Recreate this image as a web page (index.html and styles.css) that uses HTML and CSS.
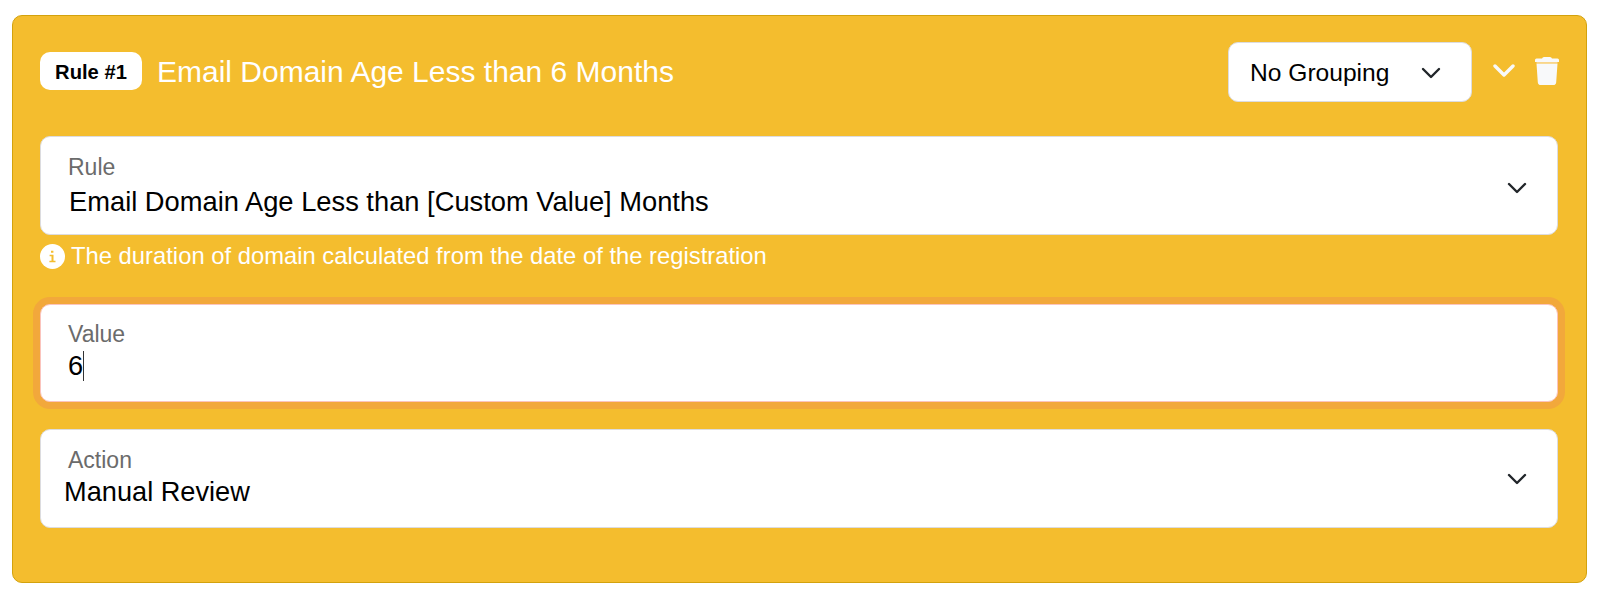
FILE: index.html
```
<!DOCTYPE html>
<html lang="en">
<head>
  <meta charset="UTF-8" />
  <meta name="viewport" content="width=device-width, initial-scale=1.0"/>
  <title>Rules</title>
  <link rel="stylesheet" href="styles.css">
</head>
<body>

  <section class="rule-card">
    <header class="rule-header">
      <span class="badge">Rule #1</span>
      <h2>Email Domain Age Less than 6 Months</h2>
      <div class="group-select">
        <span>No Grouping</span>
        <svg class="chevron" viewBox="0 0 20 12"><path d="M2 2l8 8 8-8"/></svg>
      </div>
      <svg class="collapse" viewBox="0 0 22 14"><path d="M2 2l9 9 9-9"/></svg>
      <svg class="trash" viewBox="0 0 26 30">
        <path d="M2.5 2.5H8Q8.5 1 10 1h6q1.500 0 2 1.500h5.500a1.500 1.500 0 0 1 1.500 1.500v2H1V4a1.500 1.500 0 0 1 1.500-1.500z"/>
        <path class="gap" d="M2.500 6h21v1.800h-21z"/>
        <path d="M2.500 7.800h21l-1.300 18.400a3 3 0 0 1-3 2.800H6.800a3 3 0 0 1-3-2.800z"/>
      </svg>
    </header>

    <div class="field field-rule">
      <div class="field-text">
        <label>Rule</label>
        <span class="value">Email Domain Age Less than [Custom Value] Months</span>
      </div>
      <svg class="chevron" viewBox="0 0 20 12"><path d="M2 2l8 8 8-8"/></svg>
    </div>

    <p class="hint">
      <svg class="info" viewBox="0 0 25 25">
        <circle cx="12.500" cy="12.500" r="12.500"/>
        <path d="M11 6.800h2.400v2H11zM9.600 10.700h3.900v6h2v1.600H9.400v-1.600h2.100v-4.400H9.600z"/>
      </svg>
      The duration of domain calculated from the date of the registration
    </p>

    <div class="field field-value focused">
      <div class="field-text">
        <label>Value</label>
        <span class="value">6<i class="caret"></i></span>
      </div>
    </div>

    <div class="field field-action">
      <div class="field-text">
        <label>Action</label>
        <span class="value">Manual Review</span>
      </div>
      <svg class="chevron" viewBox="0 0 20 12"><path d="M2 2l8 8 8-8"/></svg>
    </div>
  </section>

</body>
</html>
```
FILE: styles.css
```
:root {
  --yellow: #f4bd2e;
  --yellow-dark: #d3a20d;
  --focus: #f2a83b;
  --border: #dcdcdf;
}

* {
  box-sizing: border-box;
}

body {
  font-family: "Liberation Sans", Arial, sans-serif;
  margin: 0;
  padding: 15px 13px 0 12px;
  background: #fff;
  color: #000;
}

.rule-card {
  height: 568px;
  padding: 26px 28px 0 27px;
  background: var(--yellow);
  border: 1px solid var(--yellow-dark);
  border-radius: 10px;
}

.rule-header {
  display: flex;
  align-items: center;
  height: 60px;
  margin-bottom: 34px;
}

.badge {
  width: 102px;
  height: 38px;
  margin-top: -2px;
  border-radius: 10px;
  background: #fff;
  font-size: 20.2px;
  font-weight: bold;
  line-height: 40px;
  text-align: center;
}

.rule-header h2 {
  flex: 1;
  margin: 0 0 0 15px;
  color: #fff;
  font-size: 30px;
  font-weight: normal;
  line-height: 36px;
}

.group-select {
  display: flex;
  align-items: center;
  justify-content: space-between;
  width: 244px;
  height: 60px;
  padding: 1px 30px 0 21px;
  background: #fff;
  border: 1px solid var(--border);
  border-radius: 10px;
  font-size: 24.6px;
}

.chevron {
  width: 20px;
  height: 12px;
  fill: none;
  stroke: #212529;
  stroke-width: 2.4;
  stroke-linecap: round;
  stroke-linejoin: round;
}

.collapse {
  width: 22px;
  height: 14px;
  margin: -3px 0 0 21px;
  fill: none;
  stroke: #f8f9fa;
  stroke-width: 3.4;
  stroke-linecap: round;
  stroke-linejoin: round;
}

.trash {
  width: 26px;
  height: 30px;
  margin: -2px -2px 0 19px;
  fill: #f8f9fa;
}

.trash .gap {
  fill: #f9d58a;
}

.field {
  display: flex;
  align-items: center;
  justify-content: space-between;
  height: 99px;
  padding: 0 30px 0 27px;
  background: #fff;
  border: 1px solid var(--border);
  border-radius: 10px;
}

.field-text {
  display: flex;
  flex-direction: column;
  align-self: flex-start;
  padding-top: 16px;
}

.field label {
  color: #6b6b6b;
  font-size: 23px;
  line-height: 28px;
}

.field .value {
  display: flex;
  align-items: center;
  margin-top: 1px;
  font-size: 27.2px;
  line-height: 34px;
}

.field-rule .value {
  margin-top: 4px;
  margin-left: 1px;
  font-size: 27.3px;
}

.field-rule .chevron {
  margin-top: 4px;
}

.field-value .field-text {
  padding-top: 15px;
}

.field-action .value {
  margin-left: -4px;
}

.caret {
  width: 1px;
  height: 30px;
  background: #333;
}

.focused {
  border-color: #fbc4bd;
  box-shadow: 0 0 0 7px var(--focus);
}

.hint {
  display: flex;
  align-items: center;
  gap: 6px;
  height: 42px;
  margin: 0 0 27px;
  color: #fff;
  font-size: 23.8px;
}

.info {
  width: 25px;
  height: 25px;
  fill: #fff;
}

.info path {
  fill: var(--yellow);
}

.field-value {
  height: 98px;
  margin-bottom: 27px;
}
```
